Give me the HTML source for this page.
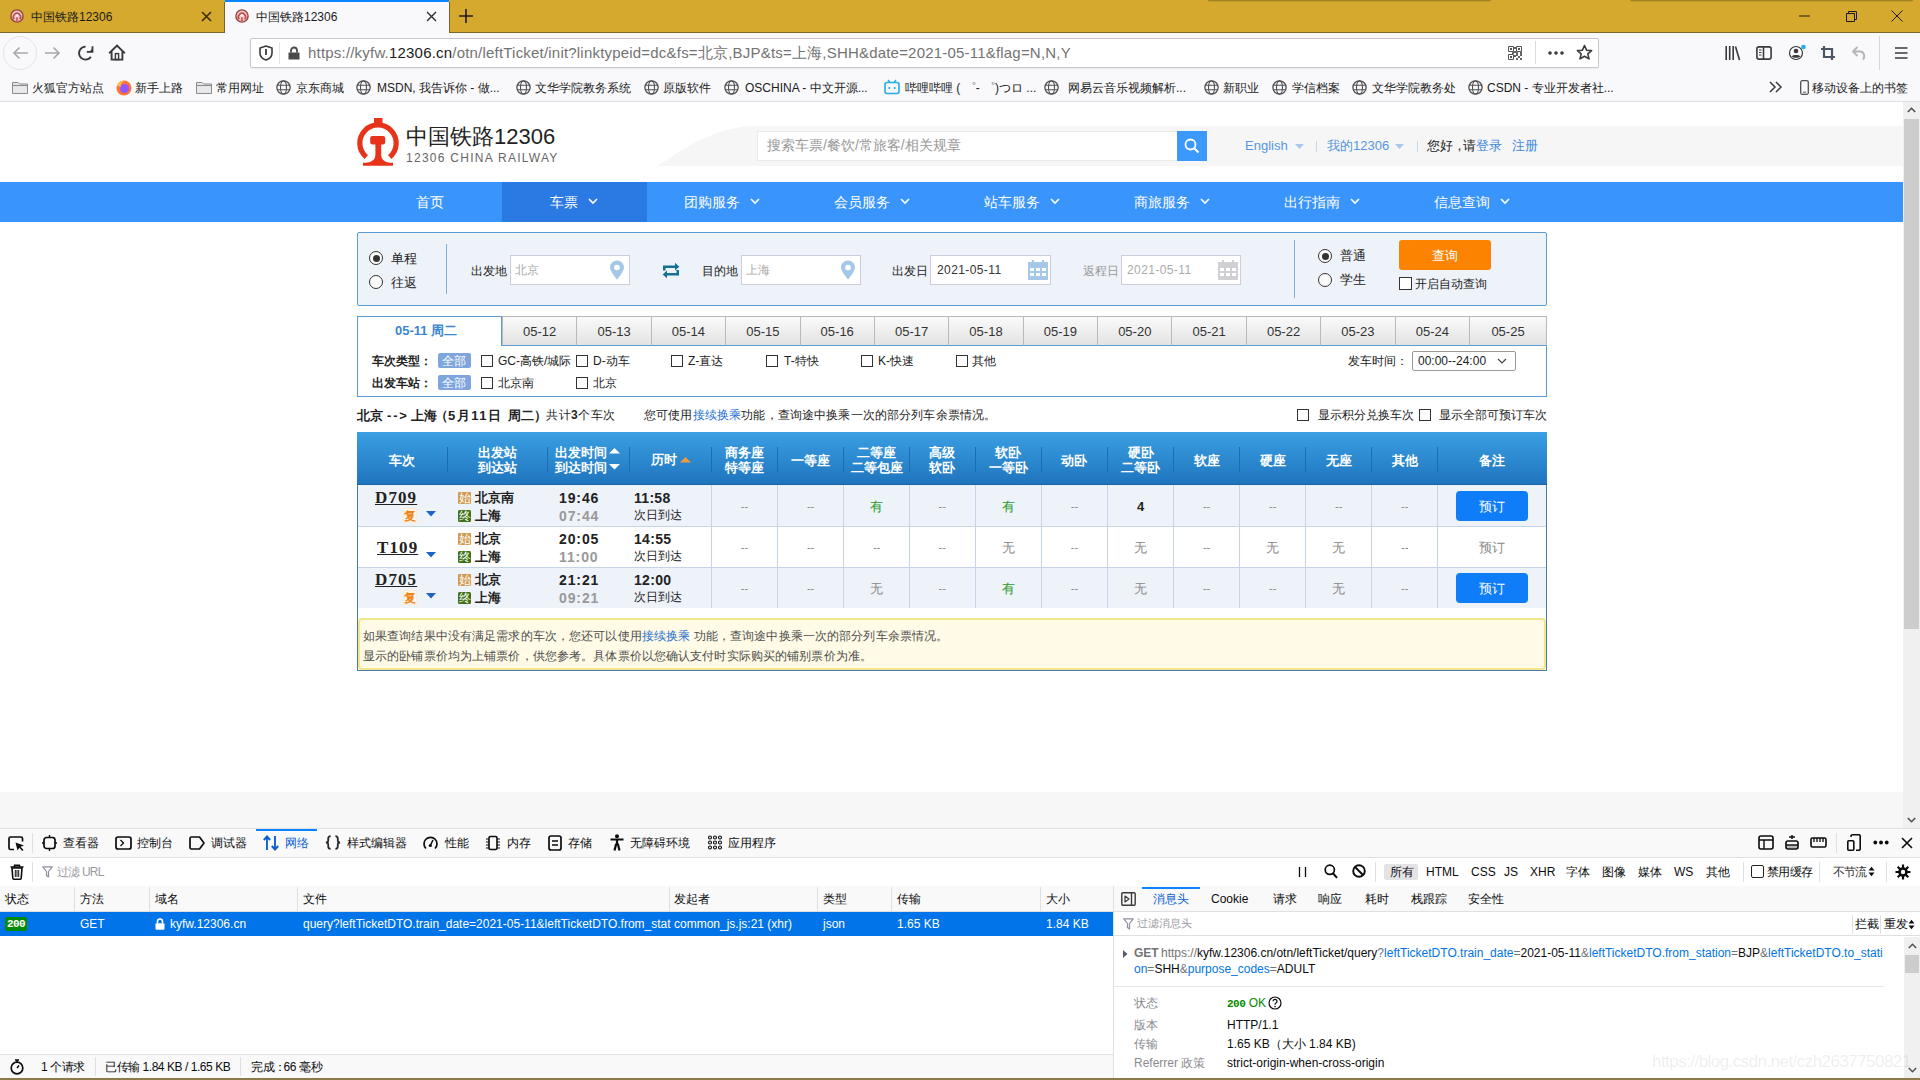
<!DOCTYPE html>
<html><head><meta charset="utf-8">
<style>
*{margin:0;padding:0;box-sizing:border-box}
html,body{width:1920px;height:1080px;overflow:hidden;background:#fff;font-family:"Liberation Sans",sans-serif;position:relative}
.a{position:absolute}
.t{position:absolute;white-space:nowrap;line-height:1}
svg{position:absolute;overflow:visible}
/* chrome */
#tabbar{left:0;top:0;width:1920px;height:33px;background:#d5a92d;border-bottom:1px solid #7a6830}
.tabtxt{font-size:12px;color:#1b1b1b}
.bm{font-size:12px;color:#1b1b1b;top:82px}
.dt{font-size:12px;color:#0c0c0d;top:837px}
.dh{font-size:12px;color:#0c0c0d;top:893px}
.dr{font-size:12px;color:#fff;top:918px}
.dp{font-size:12px;color:#0c0c0d}
</style></head><body>
<!-- ============ TAB BAR ============ -->
<div class="a" id="tabbar"></div>
<div class="a" style="left:1208px;top:0;width:283px;height:2px;background:linear-gradient(rgba(60,50,20,.45),rgba(60,50,20,0));border-radius:0 0 3px 3px"></div>
<div class="a" style="left:1630px;top:0;width:283px;height:2px;background:linear-gradient(rgba(60,50,20,.45),rgba(60,50,20,0));border-radius:0 0 3px 3px"></div>
<div class="a" style="left:225px;top:0;width:224px;height:33px;background:#f9f9fb"></div>
<div class="a" style="left:225px;top:0;width:224px;height:2px;background:#0a84ff"></div>
<div class="a" style="left:224px;top:2px;width:1px;height:31px;background:#76642e"></div>
<div class="a" style="left:449px;top:2px;width:1px;height:31px;background:#76642e"></div>
<!-- favicons -->
<svg style="left:10px;top:9px" width="14" height="14" viewBox="0 0 14 14"><circle cx="7" cy="7" r="6.1" fill="#f6caca" stroke="#96443f" stroke-width="1.4"/><path d="M4.2 10.2A3.6 3.6 0 1 1 9.8 10.2" fill="none" stroke="#b8504c" stroke-width="1.6"/><path d="M5.6 12.2H8.4L7.6 8H6.4Z" fill="#c96a66"/><circle cx="7" cy="6.5" r="1.3" fill="#fff2f2"/></svg>
<div class="t tabtxt" style="left:31px;top:11px">中国铁路12306</div>
<svg style="left:201px;top:11px" width="11" height="11"><path d="M1 1L10 10M10 1L1 10" stroke="#3a2c08" stroke-width="1.6"/></svg>
<svg style="left:235px;top:9px" width="14" height="14" viewBox="0 0 14 14"><circle cx="7" cy="7" r="6.1" fill="#f6caca" stroke="#96443f" stroke-width="1.4"/><path d="M4.2 10.2A3.6 3.6 0 1 1 9.8 10.2" fill="none" stroke="#b8504c" stroke-width="1.6"/><path d="M5.6 12.2H8.4L7.6 8H6.4Z" fill="#c96a66"/><circle cx="7" cy="6.5" r="1.3" fill="#fff2f2"/></svg>
<div class="t tabtxt" style="left:256px;top:11px">中国铁路12306</div>
<svg style="left:426px;top:11px" width="11" height="11"><path d="M1 1L10 10M10 1L1 10" stroke="#2b2b2b" stroke-width="1.4"/></svg>
<svg style="left:459px;top:9px" width="14" height="14"><path d="M7 0V14M0 7H14" stroke="#1b1b1b" stroke-width="1.6"/></svg>
<!-- window controls -->
<svg style="left:1799px;top:15px" width="12" height="2"><path d="M0 1H11" stroke="#1b1b1b" stroke-width="1"/></svg>
<svg style="left:1846px;top:11px" width="12" height="12"><path d="M0.5 2.5H8.5V10.5H0.5Z M2.5 2.5V0.5H10.5V8.5H8.5" fill="none" stroke="#1b1b1b" stroke-width="1"/></svg>
<svg style="left:1891px;top:10px" width="12" height="12"><path d="M0.5 0.5L11.5 11.5M11.5 0.5L0.5 11.5" stroke="#1b1b1b" stroke-width="1"/></svg>

<!-- ============ NAV BAR ============ -->
<div class="a" style="left:0;top:33px;width:1920px;height:39px;background:#f9f9fb"></div>
<div class="a" style="left:3px;top:36px;width:34px;height:34px;border-radius:50%;border:1px solid #e3e3e6"></div>
<svg style="left:12px;top:46px" width="17" height="14"><path d="M16 7H2M7.5 1.5L2 7L7.5 12.5" fill="none" stroke="#a8a8ab" stroke-width="1.6"/></svg>
<svg style="left:44px;top:46px" width="17" height="14"><path d="M1 7H15M9.5 1.5L15 7L9.5 12.5" fill="none" stroke="#a8a8ab" stroke-width="1.6"/></svg>
<svg style="left:77px;top:45px" width="17" height="16"><path d="M8.6 1.6A6.5 6.5 0 1 0 13.9 11.8" fill="none" stroke="#3a3a3c" stroke-width="1.8"/><path d="M9.8 6.9H15.5V1.2" fill="none" stroke="#3a3a3c" stroke-width="1.8"/><path d="M12 6.9H15.5V3.4Z" fill="#3a3a3c"/></svg>
<svg style="left:108px;top:44px" width="18" height="17"><path d="M1.2 9.3L9 1.6L16.8 9.3" fill="none" stroke="#3a3a3c" stroke-width="1.9"/><path d="M3.6 7.6V15.6H14.4V7.6" fill="none" stroke="#3a3a3c" stroke-width="1.9"/><rect x="7.4" y="9.6" width="3.2" height="6" fill="none" stroke="#3a3a3c" stroke-width="1.4"/></svg>

<!-- url bar -->
<div class="a" style="left:250px;top:38px;width:1349px;height:30px;background:#fff;border:1px solid #c6c6cb;border-radius:2px;box-shadow:0 1px 2px rgba(0,0,0,.06)"></div>
<svg style="left:259px;top:45px" width="14" height="16"><path d="M7 1L13 3V8C13 11.5 10 14 7 15C4 14 1 11.5 1 8V3Z" fill="none" stroke="#3a3a3c" stroke-width="1.6"/><path d="M7 4V10" stroke="#3a3a3c" stroke-width="1.8"/></svg>
<div class="a" style="left:279px;top:42px;width:1px;height:22px;background:#e5e5e8"></div>
<svg style="left:288px;top:46px" width="12" height="14"><path d="M3 6.5V4.5A3 3 0 0 1 9 4.5V6.5" fill="none" stroke="#4a4a4c" stroke-width="1.8"/><rect x="0.5" y="6.5" width="11" height="7" fill="#4a4a4c"/></svg>
<div class="t" style="left:308px;top:45px;font-size:15px;color:#737373;letter-spacing:0.2px">https://kyfw.<span style="color:#1b1b1b">12306.cn</span>/otn/leftTicket/init?linktypeid=dc&amp;fs=北京,BJP&amp;ts=上海,SHH&amp;date=2021-05-11&amp;flag=N,N,Y</div>
<svg style="left:1508px;top:46px" width="14" height="14" viewBox="0 0 14 14"><path d="M0.5 0.5h5v5h-5zM8.5 0.5h5v5h-5zM0.5 8.5h5v5h-5z" fill="none" stroke="#555" stroke-width="1"/><rect x="2" y="2" width="2" height="2" fill="#555"/><rect x="10" y="2" width="2" height="2" fill="#555"/><rect x="2" y="10" width="2" height="2" fill="#555"/><path d="M6 1h2v2H6zM6 5h2v2H6zM4 6h2v2H4zM8 6h2v2H8zM12 6h2v2h-2zM6 9h2v2H6zM8 8h2v2H8zM10 10h2v2h-2zM8 12h2v2H8zM12 12h2v2h-2zM12 8h2v2h-2z" fill="#666"/></svg>
<div class="a" style="left:1535px;top:41px;width:1px;height:23px;background:#dcdce0"></div>
<svg style="left:1547px;top:50px" width="18" height="6"><circle cx="3" cy="3" r="1.8" fill="#3a3a3c"/><circle cx="9" cy="3" r="1.8" fill="#3a3a3c"/><circle cx="15" cy="3" r="1.8" fill="#3a3a3c"/></svg>
<svg style="left:1576px;top:44px" width="17" height="17"><path d="M8.5 1.5L10.6 6.2L15.6 6.6L11.8 9.9L13 14.9L8.5 12.2L4 14.9L5.2 9.9L1.4 6.6L6.4 6.2Z" fill="none" stroke="#3a3a3c" stroke-width="1.6" stroke-linejoin="round"/></svg>
<!-- right toolbar icons -->
<svg style="left:1725px;top:46px" width="16" height="14"><path d="M1.2 0V14M4.7 0V14M8.2 0V14M10.5 0.5L14.5 14" fill="none" stroke="#3a3a3c" stroke-width="1.6"/></svg>
<svg style="left:1756px;top:46px" width="16" height="14"><rect x="0.9" y="0.9" width="14.2" height="12.2" rx="2" fill="none" stroke="#3a3a3c" stroke-width="1.6"/><path d="M7.5 1V13" stroke="#3a3a3c" stroke-width="1.6"/><path d="M3 4H5.5M3 6.5H5.5M3 9H5.5" stroke="#3a3a3c" stroke-width="1"/></svg>
<svg style="left:1789px;top:45px" width="18" height="16"><circle cx="7" cy="8" r="6.5" fill="none" stroke="#3a3a3c" stroke-width="1.2"/><circle cx="7" cy="6" r="2.3" fill="#3a3a3c"/><path d="M2.8 11.5C4 9.6 10 9.6 11.2 11.5C10 13.3 4 13.3 2.8 11.5Z" fill="#3a3a3c"/><circle cx="14.5" cy="2" r="2.3" fill="#26a9ee"/></svg>
<svg style="left:1821px;top:46px" width="15" height="15"><path d="M3 0V11H14M0 3H11V14" fill="none" stroke="#4b5563" stroke-width="2.2"/></svg>
<svg style="left:1852px;top:46px" width="16" height="14"><path d="M5.5 1L1 5.5L5.5 10" fill="none" stroke="#b5b5b8" stroke-width="1.8" stroke-linejoin="round"/><path d="M1.5 5.5H9A5 5 0 0 1 11 13.5" fill="none" stroke="#b5b5b8" stroke-width="2"/></svg>
<div class="a" style="left:1879px;top:36px;width:1px;height:34px;background:#d7d7db"></div>
<svg style="left:1895px;top:47px" width="13" height="12"><path d="M0 1H12.5M0 6H12.5M0 11H12.5" stroke="#3a3a3c" stroke-width="1.6"/></svg>

<!-- ============ BOOKMARKS BAR ============ -->
<div class="a" style="left:0;top:72px;width:1920px;height:30px;background:#f9f9fb;border-bottom:1px solid #e0e0e2"></div>
<svg style="left:12px;top:81px" width="16" height="13"><path d="M0.5 1.5H6L7.5 3H15.5V12.5H0.5Z" fill="#e8e8ea" stroke="#8a8a8e" stroke-width="1"/><path d="M0.5 4.5H15.5" stroke="#8a8a8e" stroke-width="1"/></svg>
<div class="t bm" style="left:32px">火狐官方站点</div>
<svg style="left:116px;top:80px" width="16" height="16" viewBox="0 0 16 16"><circle cx="8" cy="8" r="7.5" fill="#ff7139"/><circle cx="8.5" cy="8.5" r="4.5" fill="#9059ff"/><path d="M1 6C2 2 6 0 9 1C6 2 4 4 5 7C3 6 2 6 1 6Z" fill="#ffbd4f"/></svg>
<div class="t bm" style="left:135px">新手上路</div>
<svg style="left:196px;top:81px" width="16" height="13"><path d="M0.5 1.5H6L7.5 3H15.5V12.5H0.5Z" fill="#e8e8ea" stroke="#8a8a8e" stroke-width="1"/><path d="M0.5 4.5H15.5" stroke="#8a8a8e" stroke-width="1"/></svg>
<div class="t bm" style="left:216px">常用网址</div>
<svg style="left:276px;top:80px" width="15" height="15" viewBox="0 0 15 15"><circle cx="7.5" cy="7.5" r="6.6" fill="none" stroke="#505055" stroke-width="1.3"/><ellipse cx="7.5" cy="7.5" rx="3" ry="6.6" fill="none" stroke="#505055" stroke-width="1.1"/><path d="M1 5.2H14M1 9.8H14" stroke="#505055" stroke-width="1.1"/></svg>
<div class="t bm" style="left:296px">京东商城</div>
<svg style="left:356px;top:80px" width="15" height="15" viewBox="0 0 15 15"><circle cx="7.5" cy="7.5" r="6.6" fill="none" stroke="#505055" stroke-width="1.3"/><ellipse cx="7.5" cy="7.5" rx="3" ry="6.6" fill="none" stroke="#505055" stroke-width="1.1"/><path d="M1 5.2H14M1 9.8H14" stroke="#505055" stroke-width="1.1"/></svg>
<div class="t bm" style="left:377px">MSDN, 我告诉你 - 做...</div>
<svg style="left:516px;top:80px" width="15" height="15" viewBox="0 0 15 15"><circle cx="7.5" cy="7.5" r="6.6" fill="none" stroke="#505055" stroke-width="1.3"/><ellipse cx="7.5" cy="7.5" rx="3" ry="6.6" fill="none" stroke="#505055" stroke-width="1.1"/><path d="M1 5.2H14M1 9.8H14" stroke="#505055" stroke-width="1.1"/></svg>
<div class="t bm" style="left:535px">文华学院教务系统</div>
<svg style="left:644px;top:80px" width="15" height="15" viewBox="0 0 15 15"><circle cx="7.5" cy="7.5" r="6.6" fill="none" stroke="#505055" stroke-width="1.3"/><ellipse cx="7.5" cy="7.5" rx="3" ry="6.6" fill="none" stroke="#505055" stroke-width="1.1"/><path d="M1 5.2H14M1 9.8H14" stroke="#505055" stroke-width="1.1"/></svg>
<div class="t bm" style="left:663px">原版软件</div>
<svg style="left:724px;top:80px" width="15" height="15" viewBox="0 0 15 15"><circle cx="7.5" cy="7.5" r="6.6" fill="none" stroke="#505055" stroke-width="1.3"/><ellipse cx="7.5" cy="7.5" rx="3" ry="6.6" fill="none" stroke="#505055" stroke-width="1.1"/><path d="M1 5.2H14M1 9.8H14" stroke="#505055" stroke-width="1.1"/></svg>
<div class="t bm" style="left:745px">OSCHINA - 中文开源...</div>
<svg style="left:884px;top:79px" width="16" height="16" viewBox="0 0 16 16"><rect x="1" y="3.5" width="14" height="11" rx="2" fill="none" stroke="#23ade5" stroke-width="1.6"/><path d="M4 1L6 3.5M12 1L10 3.5" stroke="#23ade5" stroke-width="1.4"/><circle cx="5.3" cy="9" r="1.1" fill="#23ade5"/><circle cx="10.7" cy="9" r="1.1" fill="#23ade5"/></svg>
<div class="t bm" style="left:905px">哔哩哔哩 ( ゜- ゜)つロ ...</div>
<svg style="left:1044px;top:80px" width="15" height="15" viewBox="0 0 15 15"><circle cx="7.5" cy="7.5" r="6.6" fill="none" stroke="#505055" stroke-width="1.3"/><ellipse cx="7.5" cy="7.5" rx="3" ry="6.6" fill="none" stroke="#505055" stroke-width="1.1"/><path d="M1 5.2H14M1 9.8H14" stroke="#505055" stroke-width="1.1"/></svg>
<div class="t bm" style="left:1068px">网易云音乐视频解析...</div>
<svg style="left:1204px;top:80px" width="15" height="15" viewBox="0 0 15 15"><circle cx="7.5" cy="7.5" r="6.6" fill="none" stroke="#505055" stroke-width="1.3"/><ellipse cx="7.5" cy="7.5" rx="3" ry="6.6" fill="none" stroke="#505055" stroke-width="1.1"/><path d="M1 5.2H14M1 9.8H14" stroke="#505055" stroke-width="1.1"/></svg>
<div class="t bm" style="left:1223px">新职业</div>
<svg style="left:1272px;top:80px" width="15" height="15" viewBox="0 0 15 15"><circle cx="7.5" cy="7.5" r="6.6" fill="none" stroke="#505055" stroke-width="1.3"/><ellipse cx="7.5" cy="7.5" rx="3" ry="6.6" fill="none" stroke="#505055" stroke-width="1.1"/><path d="M1 5.2H14M1 9.8H14" stroke="#505055" stroke-width="1.1"/></svg>
<div class="t bm" style="left:1292px">学信档案</div>
<svg style="left:1352px;top:80px" width="15" height="15" viewBox="0 0 15 15"><circle cx="7.5" cy="7.5" r="6.6" fill="none" stroke="#505055" stroke-width="1.3"/><ellipse cx="7.5" cy="7.5" rx="3" ry="6.6" fill="none" stroke="#505055" stroke-width="1.1"/><path d="M1 5.2H14M1 9.8H14" stroke="#505055" stroke-width="1.1"/></svg>
<div class="t bm" style="left:1372px">文华学院教务处</div>
<svg style="left:1468px;top:80px" width="15" height="15" viewBox="0 0 15 15"><circle cx="7.5" cy="7.5" r="6.6" fill="none" stroke="#505055" stroke-width="1.3"/><ellipse cx="7.5" cy="7.5" rx="3" ry="6.6" fill="none" stroke="#505055" stroke-width="1.1"/><path d="M1 5.2H14M1 9.8H14" stroke="#505055" stroke-width="1.1"/></svg>
<div class="t bm" style="left:1487px">CSDN - 专业开发者社...</div>
<svg style="left:1769px;top:81px" width="14" height="12"><path d="M1 1L6 6L1 11M7 1L12 6L7 11" fill="none" stroke="#3a3a3c" stroke-width="1.5"/></svg>
<svg style="left:1800px;top:80px" width="9" height="15"><rect x="0.7" y="0.7" width="7.6" height="13.6" rx="1.5" fill="none" stroke="#505055" stroke-width="1.3"/><path d="M3 12.2H6" stroke="#505055" stroke-width="1"/></svg>
<div class="t bm" style="left:1812px">移动设备上的书签</div>

<!-- ============ PAGE ============ -->
<!-- PAGE -->
<!-- page bg -->
<div class="a" style="left:0;top:102px;width:1903px;height:726px;background:#fff"></div>
<div class="a" style="left:0;top:792px;width:1903px;height:36px;background:#f7f7f8"></div>
<!-- scrollbar -->
<div class="a" style="left:1903px;top:102px;width:17px;height:726px;background:#f0f0f0"></div>
<div class="a" style="left:1904px;top:119px;width:15px;height:510px;background:#cdcdcd"></div>
<svg style="left:1907px;top:107px" width="9" height="6"><path d="M0.8 5L4.5 1.3L8.2 5" fill="none" stroke="#505050" stroke-width="1.6"/></svg>
<svg style="left:1907px;top:817px" width="9" height="6"><path d="M0.8 1L4.5 4.7L8.2 1" fill="none" stroke="#505050" stroke-width="1.6"/></svg>

<!-- header -->
<svg style="left:357px;top:118px" width="43" height="49" viewBox="0 0 43 49"><path d="M9.3 39.1A18.2 18.2 0 1 1 32.7 39.1" fill="none" stroke="#e6331a" stroke-width="5.2"/><rect x="17" y="0" width="8.5" height="6" fill="#e6331a"/><rect x="13.2" y="18" width="15" height="8.5" rx="2.2" fill="#e6331a"/><path d="M18.4 26H24.2V37Q24.2 44 33 44.7H36V47.7H6V44.7H9Q18.4 44 18.4 37Z" fill="#e6331a"/></svg>
<div class="t" style="left:406px;top:126px;font-size:22px;color:#222">中国铁路12306</div>
<div class="t" style="left:406px;top:152px;font-size:12px;color:#666;letter-spacing:1.27px">12306 CHINA RAILWAY</div>
<svg style="left:656px;top:126px" width="1247" height="40"><path d="M2 40C30 20 60 2 95 0H1247V40Z" fill="#f6f6f6"/></svg>
<div class="a" style="left:757px;top:131px;width:421px;height:30px;background:#fff;border:1px solid #eaeaea"></div>
<div class="t" style="left:767px;top:138px;font-size:14px;color:#999">搜索车票/餐饮/常旅客/相关规章</div>
<div class="a" style="left:1177px;top:131px;width:30px;height:30px;background:#3b99fc"></div>
<svg style="left:1184px;top:138px" width="16" height="16"><circle cx="6.5" cy="6.5" r="5" fill="none" stroke="#fff" stroke-width="1.8"/><path d="M10.2 10.2L14.5 14.5" stroke="#fff" stroke-width="2"/></svg>
<div class="t" style="left:1245px;top:139px;font-size:13px;color:#5597e3">English</div>
<svg style="left:1295px;top:144px" width="10" height="6"><path d="M0 0H9L4.5 5Z" fill="#a9c8ec"/></svg>
<div class="a" style="left:1316px;top:141px;width:1px;height:11px;background:#c8d8ea"></div>
<div class="t" style="left:1327px;top:139px;font-size:13px;color:#5597e3">我的12306</div>
<svg style="left:1395px;top:144px" width="10" height="6"><path d="M0 0H9L4.5 5Z" fill="#a9c8ec"/></svg>
<div class="a" style="left:1417px;top:141px;width:1px;height:11px;background:#c8d8ea"></div>
<div class="t" style="left:1427px;top:139px;font-size:13px;color:#222">您好<span style="letter-spacing:-3px">，</span>请<span style="color:#3b87dd">登录</span></div>
<div class="t" style="left:1512px;top:139px;font-size:13px;color:#3b87dd">注册</div>

<!-- nav -->
<div class="a" style="left:0;top:182px;width:1903px;height:40px;background:#3994fb"></div>
<div class="a" style="left:502px;top:182px;width:145px;height:40px;background:#2b79e2"></div>
<div class="t" style="left:416px;top:195px;font-size:14px;color:#fff">首页</div>
<div class="t" style="left:550px;top:195px;font-size:14px;color:#fff">车票</div>
<svg style="left:588px;top:198px" width="10" height="7"><path d="M1 1L5 5L9 1" fill="none" stroke="#fff" stroke-width="1.6"/></svg>
<div class="t" style="left:684px;top:195px;font-size:14px;color:#fff">团购服务</div>
<svg style="left:750px;top:198px" width="10" height="7"><path d="M1 1L5 5L9 1" fill="none" stroke="#fff" stroke-width="1.6"/></svg>
<div class="t" style="left:834px;top:195px;font-size:14px;color:#fff">会员服务</div>
<svg style="left:900px;top:198px" width="10" height="7"><path d="M1 1L5 5L9 1" fill="none" stroke="#fff" stroke-width="1.6"/></svg>
<div class="t" style="left:984px;top:195px;font-size:14px;color:#fff">站车服务</div>
<svg style="left:1050px;top:198px" width="10" height="7"><path d="M1 1L5 5L9 1" fill="none" stroke="#fff" stroke-width="1.6"/></svg>
<div class="t" style="left:1134px;top:195px;font-size:14px;color:#fff">商旅服务</div>
<svg style="left:1200px;top:198px" width="10" height="7"><path d="M1 1L5 5L9 1" fill="none" stroke="#fff" stroke-width="1.6"/></svg>
<div class="t" style="left:1284px;top:195px;font-size:14px;color:#fff">出行指南</div>
<svg style="left:1350px;top:198px" width="10" height="7"><path d="M1 1L5 5L9 1" fill="none" stroke="#fff" stroke-width="1.6"/></svg>
<div class="t" style="left:1434px;top:195px;font-size:14px;color:#fff">信息查询</div>
<svg style="left:1500px;top:198px" width="10" height="7"><path d="M1 1L5 5L9 1" fill="none" stroke="#fff" stroke-width="1.6"/></svg>

<!-- search form -->
<div class="a" style="left:357px;top:232px;width:1190px;height:74px;background:#eef2f9;border:1px solid #5b9bd1;border-radius:2px"></div>
<div class="a" style="left:369px;top:251px;width:14px;height:14px;border-radius:50%;border:1.3px solid #333;background:#fff"></div>
<div class="a" style="left:372.5px;top:254.5px;width:7px;height:7px;border-radius:50%;background:#333"></div>
<div class="t" style="left:391px;top:252px;font-size:13px;color:#222">单程</div>
<div class="a" style="left:369px;top:275px;width:14px;height:14px;border-radius:50%;border:1.3px solid #333;background:#fafafa"></div>
<div class="t" style="left:391px;top:276px;font-size:13px;color:#222">往返</div>
<div class="a" style="left:446px;top:244px;width:1px;height:50px;background:#7fb0d8"></div>
<div class="t" style="left:471px;top:265px;font-size:12px;color:#222">出发地</div>
<div class="a" style="left:510px;top:255px;width:120px;height:30px;background:#fff;border:1px solid #ccd;"></div>
<div class="t" style="left:515px;top:264px;font-size:12px;color:#aaa">北京</div>
<svg style="left:609px;top:260px" width="16" height="20" viewBox="0 0 16 20"><path d="M8 19.5C8 19.5 1 11.5 1 7.5A7 7 0 0 1 15 7.5C15 11.5 8 19.5 8 19.5Z" fill="#a6c8e8"/><circle cx="8" cy="7.5" r="2.8" fill="#fff"/></svg>
<svg style="left:662px;top:262px" width="18" height="17" viewBox="0 0 18 17"><path d="M1 8.5V3.5H13V0.8L17.3 4.7L13 8.6V6H3.5V8.5Z" fill="#15718f"/><path d="M17 8V13.6H5V16.3L0.7 12.4L5 8.5V11.1H14.5V8Z" fill="#15718f"/></svg>
<div class="t" style="left:702px;top:265px;font-size:12px;color:#222">目的地</div>
<div class="a" style="left:741px;top:255px;width:120px;height:30px;background:#fff;border:1px solid #ccd;"></div>
<div class="t" style="left:746px;top:264px;font-size:12px;color:#aaa">上海</div>
<svg style="left:840px;top:260px" width="16" height="20" viewBox="0 0 16 20"><path d="M8 19.5C8 19.5 1 11.5 1 7.5A7 7 0 0 1 15 7.5C15 11.5 8 19.5 8 19.5Z" fill="#a6c8e8"/><circle cx="8" cy="7.5" r="2.8" fill="#fff"/></svg>
<div class="t" style="left:892px;top:265px;font-size:12px;color:#222">出发日</div>
<div class="a" style="left:930px;top:255px;width:121px;height:30px;background:#fff;border:1px solid #ccd;"></div>
<div class="t" style="left:937px;top:264px;font-size:12px;color:#333;letter-spacing:0.4px">2021-05-11</div>
<svg style="left:1028px;top:260px" width="20" height="20" viewBox="0 0 20 20"><rect x="0" y="2" width="20" height="18" fill="#a6c8e8"/><rect x="4" y="0" width="2" height="4" fill="#a6c8e8"/><rect x="14" y="0" width="2" height="4" fill="#a6c8e8"/><path d="M2 8h4v3H2zM8 8h4v3H8zM14 8h4v3h-4zM2 13h4v3H2zM8 13h4v3H8zM14 13h4v3h-4z" fill="#fff"/></svg>
<div class="t" style="left:1083px;top:265px;font-size:12px;color:#999">返程日</div>
<div class="a" style="left:1121px;top:255px;width:120px;height:30px;background:#fff;border:1px solid #ccd;"></div>
<div class="t" style="left:1127px;top:264px;font-size:12px;color:#aaa;letter-spacing:0.4px">2021-05-11</div>
<svg style="left:1218px;top:260px" width="20" height="20" viewBox="0 0 20 20"><rect x="0" y="2" width="20" height="18" fill="#cfcfd4"/><rect x="4" y="0" width="2" height="4" fill="#cfcfd4"/><rect x="14" y="0" width="2" height="4" fill="#cfcfd4"/><path d="M2 8h4v3H2zM8 8h4v3H8zM14 8h4v3h-4zM2 13h4v3H2zM8 13h4v3H8zM14 13h4v3h-4z" fill="#fff"/></svg>
<div class="a" style="left:1294px;top:240px;width:1px;height:58px;background:#7fb0d8"></div>
<div class="a" style="left:1318px;top:249px;width:14px;height:14px;border-radius:50%;border:1.3px solid #333;background:#fff"></div>
<div class="a" style="left:1321.5px;top:252.5px;width:7px;height:7px;border-radius:50%;background:#333"></div>
<div class="t" style="left:1340px;top:250px;font-size:12.5px;color:#222">普通</div>
<div class="a" style="left:1318px;top:273px;width:14px;height:14px;border-radius:50%;border:1.3px solid #333;background:#fafafa"></div>
<div class="t" style="left:1340px;top:274px;font-size:12.5px;color:#222">学生</div>
<div class="a" style="left:1399px;top:240px;width:92px;height:30px;background:#fc8302;border-radius:3px"></div>
<div class="t" style="left:1432px;top:249px;font-size:13px;color:#fff">查询</div>
<div class="a" style="left:1399px;top:277px;width:13px;height:13px;border:1px solid #333;background:#fff"></div>
<div class="t" style="left:1415px;top:278px;font-size:12px;color:#222">开启自动查询</div>

<!-- date tabs -->
<div class="a" style="left:357px;top:345px;width:1190px;height:52px;background:#fff;border:1px solid #5b9bd1;border-top:none"></div>
<div class="a" style="left:502.00px;top:316px;width:75.38px;height:30px;background:linear-gradient(#fafafa,#e2e2e2);border:1px solid #b9b9b9;border-bottom:1px solid #5b9bd1"></div>
<div class="t" style="left:502.00px;width:75.38px;text-align:center;top:325px;font-size:13px;color:#333">05-12</div>
<div class="a" style="left:576.38px;top:316px;width:75.38px;height:30px;background:linear-gradient(#fafafa,#e2e2e2);border:1px solid #b9b9b9;border-bottom:1px solid #5b9bd1"></div>
<div class="t" style="left:576.38px;width:75.38px;text-align:center;top:325px;font-size:13px;color:#333">05-13</div>
<div class="a" style="left:650.77px;top:316px;width:75.38px;height:30px;background:linear-gradient(#fafafa,#e2e2e2);border:1px solid #b9b9b9;border-bottom:1px solid #5b9bd1"></div>
<div class="t" style="left:650.77px;width:75.38px;text-align:center;top:325px;font-size:13px;color:#333">05-14</div>
<div class="a" style="left:725.15px;top:316px;width:75.38px;height:30px;background:linear-gradient(#fafafa,#e2e2e2);border:1px solid #b9b9b9;border-bottom:1px solid #5b9bd1"></div>
<div class="t" style="left:725.15px;width:75.38px;text-align:center;top:325px;font-size:13px;color:#333">05-15</div>
<div class="a" style="left:799.54px;top:316px;width:75.38px;height:30px;background:linear-gradient(#fafafa,#e2e2e2);border:1px solid #b9b9b9;border-bottom:1px solid #5b9bd1"></div>
<div class="t" style="left:799.54px;width:75.38px;text-align:center;top:325px;font-size:13px;color:#333">05-16</div>
<div class="a" style="left:873.92px;top:316px;width:75.38px;height:30px;background:linear-gradient(#fafafa,#e2e2e2);border:1px solid #b9b9b9;border-bottom:1px solid #5b9bd1"></div>
<div class="t" style="left:873.92px;width:75.38px;text-align:center;top:325px;font-size:13px;color:#333">05-17</div>
<div class="a" style="left:948.31px;top:316px;width:75.38px;height:30px;background:linear-gradient(#fafafa,#e2e2e2);border:1px solid #b9b9b9;border-bottom:1px solid #5b9bd1"></div>
<div class="t" style="left:948.31px;width:75.38px;text-align:center;top:325px;font-size:13px;color:#333">05-18</div>
<div class="a" style="left:1022.69px;top:316px;width:75.38px;height:30px;background:linear-gradient(#fafafa,#e2e2e2);border:1px solid #b9b9b9;border-bottom:1px solid #5b9bd1"></div>
<div class="t" style="left:1022.69px;width:75.38px;text-align:center;top:325px;font-size:13px;color:#333">05-19</div>
<div class="a" style="left:1097.08px;top:316px;width:75.38px;height:30px;background:linear-gradient(#fafafa,#e2e2e2);border:1px solid #b9b9b9;border-bottom:1px solid #5b9bd1"></div>
<div class="t" style="left:1097.08px;width:75.38px;text-align:center;top:325px;font-size:13px;color:#333">05-20</div>
<div class="a" style="left:1171.46px;top:316px;width:75.38px;height:30px;background:linear-gradient(#fafafa,#e2e2e2);border:1px solid #b9b9b9;border-bottom:1px solid #5b9bd1"></div>
<div class="t" style="left:1171.46px;width:75.38px;text-align:center;top:325px;font-size:13px;color:#333">05-21</div>
<div class="a" style="left:1245.85px;top:316px;width:75.38px;height:30px;background:linear-gradient(#fafafa,#e2e2e2);border:1px solid #b9b9b9;border-bottom:1px solid #5b9bd1"></div>
<div class="t" style="left:1245.85px;width:75.38px;text-align:center;top:325px;font-size:13px;color:#333">05-22</div>
<div class="a" style="left:1320.23px;top:316px;width:75.38px;height:30px;background:linear-gradient(#fafafa,#e2e2e2);border:1px solid #b9b9b9;border-bottom:1px solid #5b9bd1"></div>
<div class="t" style="left:1320.23px;width:75.38px;text-align:center;top:325px;font-size:13px;color:#333">05-23</div>
<div class="a" style="left:1394.62px;top:316px;width:75.38px;height:30px;background:linear-gradient(#fafafa,#e2e2e2);border:1px solid #b9b9b9;border-bottom:1px solid #5b9bd1"></div>
<div class="t" style="left:1394.62px;width:75.38px;text-align:center;top:325px;font-size:13px;color:#333">05-24</div>
<div class="a" style="left:1469.00px;top:316px;width:78.00px;height:30px;background:linear-gradient(#fafafa,#e2e2e2);border:1px solid #b9b9b9;border-bottom:1px solid #5b9bd1"></div>
<div class="t" style="left:1469.00px;width:78.00px;text-align:center;top:325px;font-size:13px;color:#333">05-25</div>
<div class="a" style="left:357px;top:316px;width:145px;height:30px;background:#fff;border:1px solid #5b9bd1;border-bottom:none"></div>
<div class="t" style="left:395px;top:324px;font-size:13px;font-weight:bold;color:#3a87cf">05-11 周二</div>

<!-- filters -->
<div class="t" style="left:372px;top:355px;font-size:12px;font-weight:bold;color:#222">车次类型：</div>
<div class="a" style="left:438px;top:353px;width:33px;height:15px;background:#7ea5dc;border-radius:2px"></div>
<div class="t" style="left:442px;top:355px;font-size:12px;color:#fff">全部</div>
<div class="t" style="left:372px;top:377px;font-size:12px;font-weight:bold;color:#222">出发车站：</div>
<div class="a" style="left:438px;top:375px;width:33px;height:15px;background:#7ea5dc;border-radius:2px"></div>
<div class="t" style="left:442px;top:377px;font-size:12px;color:#fff">全部</div>
<div class="a" style="left:481px;top:355px;width:12px;height:12px;border:1px solid #333;background:#fff"></div>
<div class="t" style="left:498px;top:355px;font-size:12px;color:#222">GC-高铁/城际</div>
<div class="a" style="left:576px;top:355px;width:12px;height:12px;border:1px solid #333;background:#fff"></div>
<div class="t" style="left:593px;top:355px;font-size:12px;color:#222">D-动车</div>
<div class="a" style="left:671px;top:355px;width:12px;height:12px;border:1px solid #333;background:#fff"></div>
<div class="t" style="left:688px;top:355px;font-size:12px;color:#222">Z-直达</div>
<div class="a" style="left:766px;top:355px;width:12px;height:12px;border:1px solid #333;background:#fff"></div>
<div class="t" style="left:784px;top:355px;font-size:12px;color:#222">T-特快</div>
<div class="a" style="left:861px;top:355px;width:12px;height:12px;border:1px solid #333;background:#fff"></div>
<div class="t" style="left:878px;top:355px;font-size:12px;color:#222">K-快速</div>
<div class="a" style="left:956px;top:355px;width:12px;height:12px;border:1px solid #333;background:#fff"></div>
<div class="t" style="left:972px;top:355px;font-size:12px;color:#222">其他</div>
<div class="a" style="left:481px;top:377px;width:12px;height:12px;border:1px solid #333;background:#fff"></div>
<div class="t" style="left:498px;top:377px;font-size:12px;color:#222">北京南</div>
<div class="a" style="left:576px;top:377px;width:12px;height:12px;border:1px solid #333;background:#fff"></div>
<div class="t" style="left:593px;top:377px;font-size:12px;color:#222">北京</div>
<div class="t" style="left:1348px;top:355px;font-size:12px;color:#222">发车时间：</div>
<div class="a" style="left:1412px;top:351px;width:104px;height:20px;background:#fff;border:1px solid #999;border-radius:2px"></div>
<div class="t" style="left:1418px;top:355px;font-size:12px;color:#222">00:00--24:00</div>
<svg style="left:1497px;top:358px" width="10" height="6"><path d="M1 1L5 5L9 1" fill="none" stroke="#444" stroke-width="1.2"/></svg>

<!-- summary -->
<div class="t" style="left:357px;top:409px;font-size:13px;font-weight:bold;color:#222">北京</div>
<div class="t" style="left:387px;top:409px;font-size:13px;font-weight:bold;color:#222;letter-spacing:1.8px">--&gt;</div>
<div class="t" style="left:411px;top:409px;font-size:13px;font-weight:bold;color:#222">上海</div>
<div class="t" style="left:435px;top:409px;font-size:13px;font-weight:bold;color:#222">（</div>
<div class="t" style="left:448px;top:409px;font-size:13px;font-weight:bold;color:#222;letter-spacing:1.5px">5月11日</div>
<div class="t" style="left:508px;top:409px;font-size:13px;font-weight:bold;color:#222">周二</div>
<div class="t" style="left:534px;top:409px;font-size:13px;font-weight:bold;color:#222">）</div>
<div class="t" style="left:546px;top:409px;font-size:12px;color:#222;letter-spacing:0.5px">共计<b>3</b>个车次</div>
<div class="t" style="left:644px;top:409px;font-size:12px;color:#222;letter-spacing:0.15px">您可使用<span style="color:#1e6fd0">接续换乘</span>功能，查询途中换乘一次的部分列车余票情况。</div>
<div class="a" style="left:1297px;top:409px;width:12px;height:12px;border:1px solid #333;background:#fff"></div>
<div class="t" style="left:1318px;top:409px;font-size:12px;color:#222">显示积分兑换车次</div>
<div class="a" style="left:1419px;top:409px;width:12px;height:12px;border:1px solid #333;background:#fff"></div>
<div class="t" style="left:1439px;top:409px;font-size:12px;color:#222">显示全部可预订车次</div>

<!-- table -->
<div class="a" style="left:357px;top:432px;width:1190px;height:53px;background:linear-gradient(#3b9fe2,#1f75be);border-bottom:1px solid #1a65a8"></div>
<div class="a" style="left:447px;top:447px;width:1px;height:25px;background:#1d6bb0"></div>
<div class="a" style="left:547px;top:447px;width:1px;height:25px;background:#1d6bb0"></div>
<div class="a" style="left:629px;top:447px;width:1px;height:25px;background:#1d6bb0"></div>
<div class="a" style="left:711px;top:447px;width:1px;height:25px;background:#1d6bb0"></div>
<div class="a" style="left:777px;top:447px;width:1px;height:25px;background:#1d6bb0"></div>
<div class="a" style="left:843px;top:447px;width:1px;height:25px;background:#1d6bb0"></div>
<div class="a" style="left:909px;top:447px;width:1px;height:25px;background:#1d6bb0"></div>
<div class="a" style="left:975px;top:447px;width:1px;height:25px;background:#1d6bb0"></div>
<div class="a" style="left:1041px;top:447px;width:1px;height:25px;background:#1d6bb0"></div>
<div class="a" style="left:1107px;top:447px;width:1px;height:25px;background:#1d6bb0"></div>
<div class="a" style="left:1173px;top:447px;width:1px;height:25px;background:#1d6bb0"></div>
<div class="a" style="left:1239px;top:447px;width:1px;height:25px;background:#1d6bb0"></div>
<div class="a" style="left:1305px;top:447px;width:1px;height:25px;background:#1d6bb0"></div>
<div class="a" style="left:1371px;top:447px;width:1px;height:25px;background:#1d6bb0"></div>
<div class="a" style="left:1437px;top:447px;width:1px;height:25px;background:#1d6bb0"></div>
<div class="a" style="left:357px;width:90.5px;top:452.5px;text-align:center;font-size:13px;line-height:15px;font-weight:bold;color:#fff;white-space:nowrap">车次</div>
<div class="a" style="left:447.5px;width:100.0px;top:444.5px;text-align:center;font-size:13px;line-height:15px;font-weight:bold;color:#fff;white-space:nowrap">出发站<br>到达站</div>
<div class="a" style="left:555px;top:444.5px;font-size:13px;line-height:15px;font-weight:bold;color:#fff;white-space:nowrap">出发时间<br>到达时间</div>
<svg style="left:609px;top:448px" width="11" height="6"><path d="M0 5.5L5.5 0L11 5.5Z" fill="#fff"/></svg>
<svg style="left:609px;top:464px" width="11" height="6"><path d="M0 0L5.5 5.5L11 0Z" fill="#fff"/></svg>
<div class="a" style="left:651px;top:452px;font-size:13px;line-height:15px;font-weight:bold;color:#fff;white-space:nowrap">历时</div>
<svg style="left:680px;top:457px" width="11" height="6"><path d="M0 5.5L5.5 0L11 5.5Z" fill="#f39a3c"/></svg>
<div class="a" style="left:711.5px;width:66.0px;top:444.5px;text-align:center;font-size:13px;line-height:15px;font-weight:bold;color:#fff;white-space:nowrap">商务座<br>特等座</div>
<div class="a" style="left:777.5px;width:66.25px;top:452.5px;text-align:center;font-size:13px;line-height:15px;font-weight:bold;color:#fff;white-space:nowrap">一等座</div>
<div class="a" style="left:843.75px;width:65.64999999999998px;top:444.5px;text-align:center;font-size:13px;line-height:15px;font-weight:bold;color:#fff;white-space:nowrap">二等座<br>二等包座</div>
<div class="a" style="left:909.4px;width:65.60000000000002px;top:444.5px;text-align:center;font-size:13px;line-height:15px;font-weight:bold;color:#fff;white-space:nowrap">高级<br>软卧</div>
<div class="a" style="left:975px;width:66px;top:444.5px;text-align:center;font-size:13px;line-height:15px;font-weight:bold;color:#fff;white-space:nowrap">软卧<br>一等卧</div>
<div class="a" style="left:1041px;width:66.79999999999995px;top:452.5px;text-align:center;font-size:13px;line-height:15px;font-weight:bold;color:#fff;white-space:nowrap">动卧</div>
<div class="a" style="left:1107.8px;width:65.60000000000014px;top:444.5px;text-align:center;font-size:13px;line-height:15px;font-weight:bold;color:#fff;white-space:nowrap">硬卧<br>二等卧</div>
<div class="a" style="left:1173.4px;width:66.29999999999995px;top:452.5px;text-align:center;font-size:13px;line-height:15px;font-weight:bold;color:#fff;white-space:nowrap">软座</div>
<div class="a" style="left:1239.7px;width:65.89999999999986px;top:452.5px;text-align:center;font-size:13px;line-height:15px;font-weight:bold;color:#fff;white-space:nowrap">硬座</div>
<div class="a" style="left:1305.6px;width:66.30000000000018px;top:452.5px;text-align:center;font-size:13px;line-height:15px;font-weight:bold;color:#fff;white-space:nowrap">无座</div>
<div class="a" style="left:1371.9px;width:65.59999999999991px;top:452.5px;text-align:center;font-size:13px;line-height:15px;font-weight:bold;color:#fff;white-space:nowrap">其他</div>
<div class="a" style="left:1437.5px;width:109.5px;top:452.5px;text-align:center;font-size:13px;line-height:15px;font-weight:bold;color:#fff;white-space:nowrap">备注</div>
<div class="a" style="left:357px;top:485px;width:1190px;height:41px;background:#eef2f9"></div>
<div class="a" style="left:357px;top:526px;width:1190px;height:41px;background:#fff"></div>
<div class="a" style="left:357px;top:567px;width:1190px;height:41px;background:#eef2f9"></div>
<div class="a" style="left:357px;top:526px;width:1190px;height:1px;background:#c6d5e6"></div>
<div class="a" style="left:357px;top:567px;width:1190px;height:1px;background:#c6d5e6"></div>
<div class="a" style="left:711px;top:485px;width:1px;height:123px;background:#c6d5e6"></div>
<div class="a" style="left:777px;top:485px;width:1px;height:123px;background:#c6d5e6"></div>
<div class="a" style="left:843px;top:485px;width:1px;height:123px;background:#c6d5e6"></div>
<div class="a" style="left:909px;top:485px;width:1px;height:123px;background:#c6d5e6"></div>
<div class="a" style="left:975px;top:485px;width:1px;height:123px;background:#c6d5e6"></div>
<div class="a" style="left:1041px;top:485px;width:1px;height:123px;background:#c6d5e6"></div>
<div class="a" style="left:1107px;top:485px;width:1px;height:123px;background:#c6d5e6"></div>
<div class="a" style="left:1173px;top:485px;width:1px;height:123px;background:#c6d5e6"></div>
<div class="a" style="left:1239px;top:485px;width:1px;height:123px;background:#c6d5e6"></div>
<div class="a" style="left:1305px;top:485px;width:1px;height:123px;background:#c6d5e6"></div>
<div class="a" style="left:1371px;top:485px;width:1px;height:123px;background:#c6d5e6"></div>
<div class="a" style="left:1437px;top:485px;width:1px;height:123px;background:#c6d5e6"></div>
<div class="t" style="left:375px;top:489px;font-family:'Liberation Serif',serif;font-size:17px;font-weight:bold;color:#222;text-decoration:underline;letter-spacing:1.1px">D709</div>
<div class="a" style="left:403px;top:508px;width:14px;height:15px;background:#fff6ea;border:1px solid #fdebd6"></div>
<div class="t" style="left:404px;top:510px;font-size:12px;color:#ee8418;font-weight:bold">复</div>
<svg style="left:426px;top:511px" width="10" height="6"><path d="M0 0H10L5 5.5Z" fill="#1d62c9"/></svg>
<div class="a" style="left:458px;top:492px;width:13px;height:12px;background:#d09a52;border-radius:1px"></div>
<div class="t" style="left:458.5px;top:492px;font-size:12px;color:#fff">始</div>
<div class="a" style="left:458px;top:510px;width:13px;height:12px;background:#3e7015;border-radius:1.5px"></div>
<div class="t" style="left:458.5px;top:510px;font-size:12px;color:#fff">终</div>
<div class="t" style="left:475px;top:491px;font-size:13px;font-weight:bold;color:#222">北京南</div>
<div class="t" style="left:475px;top:509px;font-size:13px;font-weight:bold;color:#222">上海</div>
<div class="t" style="left:559px;top:491px;font-size:14px;font-weight:bold;color:#222;letter-spacing:0.9px">19:46</div>
<div class="t" style="left:559px;top:509px;font-size:14px;font-weight:bold;color:#999;letter-spacing:0.9px">07:44</div>
<div class="t" style="left:634px;top:491px;font-size:14px;font-weight:bold;color:#222;letter-spacing:0.3px">11:58</div>
<div class="t" style="left:634px;top:509px;font-size:12px;color:#222">次日到达</div>
<div class="a" style="left:711.5px;width:66.0px;top:499px;text-align:center;font-size:11px;line-height:14px;font-weight:normal;color:#888">--</div>
<div class="a" style="left:777.5px;width:66.25px;top:499px;text-align:center;font-size:11px;line-height:14px;font-weight:normal;color:#888">--</div>
<div class="a" style="left:843.75px;width:65.64999999999998px;top:500px;text-align:center;font-size:13px;line-height:14px;font-weight:normal;color:#2a9a2a">有</div>
<div class="a" style="left:909.4px;width:65.60000000000002px;top:499px;text-align:center;font-size:11px;line-height:14px;font-weight:normal;color:#888">--</div>
<div class="a" style="left:975px;width:66px;top:500px;text-align:center;font-size:13px;line-height:14px;font-weight:normal;color:#2a9a2a">有</div>
<div class="a" style="left:1041px;width:66.79999999999995px;top:499px;text-align:center;font-size:11px;line-height:14px;font-weight:normal;color:#888">--</div>
<div class="a" style="left:1107.8px;width:65.60000000000014px;top:500px;text-align:center;font-size:13px;line-height:14px;font-weight:bold;color:#222">4</div>
<div class="a" style="left:1173.4px;width:66.29999999999995px;top:499px;text-align:center;font-size:11px;line-height:14px;font-weight:normal;color:#888">--</div>
<div class="a" style="left:1239.7px;width:65.89999999999986px;top:499px;text-align:center;font-size:11px;line-height:14px;font-weight:normal;color:#888">--</div>
<div class="a" style="left:1305.6px;width:66.30000000000018px;top:499px;text-align:center;font-size:11px;line-height:14px;font-weight:normal;color:#888">--</div>
<div class="a" style="left:1371.9px;width:65.59999999999991px;top:499px;text-align:center;font-size:11px;line-height:14px;font-weight:normal;color:#888">--</div>
<div class="a" style="left:1456px;top:491px;width:72px;height:30px;background:#0f7df7;border-radius:4px"></div>
<div class="a" style="left:1456px;width:72px;top:500px;text-align:center;font-size:13px;line-height:14px;color:#fff">预订</div>
<div class="t" style="left:377px;top:539px;font-family:'Liberation Serif',serif;font-size:17px;font-weight:bold;color:#222;text-decoration:underline;letter-spacing:1.1px">T109</div>
<svg style="left:426px;top:552px" width="10" height="6"><path d="M0 0H10L5 5.5Z" fill="#1d62c9"/></svg>
<div class="a" style="left:458px;top:533px;width:13px;height:12px;background:#d09a52;border-radius:1px"></div>
<div class="t" style="left:458.5px;top:533px;font-size:12px;color:#fff">始</div>
<div class="a" style="left:458px;top:551px;width:13px;height:12px;background:#3e7015;border-radius:1.5px"></div>
<div class="t" style="left:458.5px;top:551px;font-size:12px;color:#fff">终</div>
<div class="t" style="left:475px;top:532px;font-size:13px;font-weight:bold;color:#222">北京</div>
<div class="t" style="left:475px;top:550px;font-size:13px;font-weight:bold;color:#222">上海</div>
<div class="t" style="left:559px;top:532px;font-size:14px;font-weight:bold;color:#222;letter-spacing:0.9px">20:05</div>
<div class="t" style="left:559px;top:550px;font-size:14px;font-weight:bold;color:#999;letter-spacing:0.9px">11:00</div>
<div class="t" style="left:634px;top:532px;font-size:14px;font-weight:bold;color:#222;letter-spacing:0.3px">14:55</div>
<div class="t" style="left:634px;top:550px;font-size:12px;color:#222">次日到达</div>
<div class="a" style="left:711.5px;width:66.0px;top:540px;text-align:center;font-size:11px;line-height:14px;font-weight:normal;color:#888">--</div>
<div class="a" style="left:777.5px;width:66.25px;top:540px;text-align:center;font-size:11px;line-height:14px;font-weight:normal;color:#888">--</div>
<div class="a" style="left:843.75px;width:65.64999999999998px;top:540px;text-align:center;font-size:11px;line-height:14px;font-weight:normal;color:#888">--</div>
<div class="a" style="left:909.4px;width:65.60000000000002px;top:540px;text-align:center;font-size:11px;line-height:14px;font-weight:normal;color:#888">--</div>
<div class="a" style="left:975px;width:66px;top:541px;text-align:center;font-size:13px;line-height:14px;font-weight:normal;color:#888">无</div>
<div class="a" style="left:1041px;width:66.79999999999995px;top:540px;text-align:center;font-size:11px;line-height:14px;font-weight:normal;color:#888">--</div>
<div class="a" style="left:1107.8px;width:65.60000000000014px;top:541px;text-align:center;font-size:13px;line-height:14px;font-weight:normal;color:#888">无</div>
<div class="a" style="left:1173.4px;width:66.29999999999995px;top:540px;text-align:center;font-size:11px;line-height:14px;font-weight:normal;color:#888">--</div>
<div class="a" style="left:1239.7px;width:65.89999999999986px;top:541px;text-align:center;font-size:13px;line-height:14px;font-weight:normal;color:#888">无</div>
<div class="a" style="left:1305.6px;width:66.30000000000018px;top:541px;text-align:center;font-size:13px;line-height:14px;font-weight:normal;color:#888">无</div>
<div class="a" style="left:1371.9px;width:65.59999999999991px;top:540px;text-align:center;font-size:11px;line-height:14px;font-weight:normal;color:#888">--</div>
<div class="a" style="left:1456px;width:72px;top:541px;text-align:center;font-size:13px;line-height:14px;color:#888">预订</div>
<div class="t" style="left:375px;top:571px;font-family:'Liberation Serif',serif;font-size:17px;font-weight:bold;color:#222;text-decoration:underline;letter-spacing:1.1px">D705</div>
<div class="a" style="left:403px;top:590px;width:14px;height:15px;background:#fff6ea;border:1px solid #fdebd6"></div>
<div class="t" style="left:404px;top:592px;font-size:12px;color:#ee8418;font-weight:bold">复</div>
<svg style="left:426px;top:593px" width="10" height="6"><path d="M0 0H10L5 5.5Z" fill="#1d62c9"/></svg>
<div class="a" style="left:458px;top:574px;width:13px;height:12px;background:#d09a52;border-radius:1px"></div>
<div class="t" style="left:458.5px;top:574px;font-size:12px;color:#fff">始</div>
<div class="a" style="left:458px;top:592px;width:13px;height:12px;background:#3e7015;border-radius:1.5px"></div>
<div class="t" style="left:458.5px;top:592px;font-size:12px;color:#fff">终</div>
<div class="t" style="left:475px;top:573px;font-size:13px;font-weight:bold;color:#222">北京</div>
<div class="t" style="left:475px;top:591px;font-size:13px;font-weight:bold;color:#222">上海</div>
<div class="t" style="left:559px;top:573px;font-size:14px;font-weight:bold;color:#222;letter-spacing:0.9px">21:21</div>
<div class="t" style="left:559px;top:591px;font-size:14px;font-weight:bold;color:#999;letter-spacing:0.9px">09:21</div>
<div class="t" style="left:634px;top:573px;font-size:14px;font-weight:bold;color:#222;letter-spacing:0.3px">12:00</div>
<div class="t" style="left:634px;top:591px;font-size:12px;color:#222">次日到达</div>
<div class="a" style="left:711.5px;width:66.0px;top:581px;text-align:center;font-size:11px;line-height:14px;font-weight:normal;color:#888">--</div>
<div class="a" style="left:777.5px;width:66.25px;top:581px;text-align:center;font-size:11px;line-height:14px;font-weight:normal;color:#888">--</div>
<div class="a" style="left:843.75px;width:65.64999999999998px;top:582px;text-align:center;font-size:13px;line-height:14px;font-weight:normal;color:#888">无</div>
<div class="a" style="left:909.4px;width:65.60000000000002px;top:581px;text-align:center;font-size:11px;line-height:14px;font-weight:normal;color:#888">--</div>
<div class="a" style="left:975px;width:66px;top:582px;text-align:center;font-size:13px;line-height:14px;font-weight:normal;color:#2a9a2a">有</div>
<div class="a" style="left:1041px;width:66.79999999999995px;top:581px;text-align:center;font-size:11px;line-height:14px;font-weight:normal;color:#888">--</div>
<div class="a" style="left:1107.8px;width:65.60000000000014px;top:582px;text-align:center;font-size:13px;line-height:14px;font-weight:normal;color:#888">无</div>
<div class="a" style="left:1173.4px;width:66.29999999999995px;top:581px;text-align:center;font-size:11px;line-height:14px;font-weight:normal;color:#888">--</div>
<div class="a" style="left:1239.7px;width:65.89999999999986px;top:581px;text-align:center;font-size:11px;line-height:14px;font-weight:normal;color:#888">--</div>
<div class="a" style="left:1305.6px;width:66.30000000000018px;top:582px;text-align:center;font-size:13px;line-height:14px;font-weight:normal;color:#888">无</div>
<div class="a" style="left:1371.9px;width:65.59999999999991px;top:581px;text-align:center;font-size:11px;line-height:14px;font-weight:normal;color:#888">--</div>
<div class="a" style="left:1456px;top:573px;width:72px;height:30px;background:#0f7df7;border-radius:4px"></div>
<div class="a" style="left:1456px;width:72px;top:582px;text-align:center;font-size:13px;line-height:14px;color:#fff">预订</div>

<!-- notice -->
<div class="a" style="left:357px;top:485px;width:1190px;height:186px;border:1px solid #4a7ba6;border-top:none"></div>
<div class="a" style="left:358px;top:618px;width:1188px;height:52px;background:#fffbe6;border:2px solid #f3e68a;border-radius:4px"></div>
<div class="t" style="left:363px;top:630px;font-size:12px;color:#4d4d4d;letter-spacing:0.12px">如果查询结果中没有满足需求的车次，您还可以使用<span style="color:#1e6fd0">接续换乘</span> 功能，查询途中换乘一次的部分列车余票情况。</div>
<div class="t" style="left:363px;top:650px;font-size:12px;color:#4d4d4d;letter-spacing:0.12px">显示的卧铺票价均为上铺票价，供您参考。具体票价以您确认支付时实际购买的铺别票价为准。</div>

<!-- /PAGE -->

<!-- ============ DEVTOOLS ============ -->
<!-- DEVTOOLS -->
<!-- devtools -->
<div class="a" style="left:0;top:828px;width:1920px;height:252px;background:#fff"></div>
<div class="a" style="left:0;top:828px;width:1920px;height:30px;background:#f9f9fa;border-top:1px solid #e0e0e2;border-bottom:1px solid #e0e0e2"></div>
<div class="a" style="left:256px;top:829px;width:61px;height:2px;background:#0a84ff"></div>
<svg style="left:8px;top:836px" width="17" height="15" viewBox="0 0 17 15"><path d="M6 13.5H2.5A1.5 1.5 0 0 1 1 12V2.5A1.5 1.5 0 0 1 2.5 1H13A1.5 1.5 0 0 1 14.5 2.5V5.5" fill="none" stroke="#0c0c0d" stroke-width="1.7"/><path d="M7.5 6.5L16 9.5L12.5 10.8L15.5 14L14.3 15L11.3 11.8L9.5 14.5Z" fill="#0c0c0d"/></svg>
<div class="a" style="left:32px;top:833px;width:1px;height:20px;background:#e0e0e2"></div>
<svg style="left:42px;top:835px" width="15" height="16" viewBox="0 0 15 16"><rect x="2" y="2.5" width="11" height="11" rx="2.5" fill="none" stroke="#0c0c0d" stroke-width="1.7"/><path d="M7.5 0V2.5M7.5 13.5V16M0 8H2M13 8H15" stroke="#0c0c0d" stroke-width="1.4"/></svg>
<div class="t dt" style="left:63px">查看器</div>
<svg style="left:115px;top:836px" width="17" height="14" viewBox="0 0 17 14"><rect x="1" y="1" width="15" height="12" rx="2" fill="none" stroke="#0c0c0d" stroke-width="1.7"/><path d="M5.5 4L8.5 7L5.5 10" fill="none" stroke="#0c0c0d" stroke-width="1.3"/></svg>
<div class="t dt" style="left:137px">控制台</div>
<svg style="left:189px;top:836px" width="16" height="14" viewBox="0 0 16 14"><path d="M1 2.5A1.5 1.5 0 0 1 2.5 1H10.5L15 7L10.5 13H2.5A1.5 1.5 0 0 1 1 11.5Z" fill="none" stroke="#0c0c0d" stroke-width="1.7" stroke-linejoin="round"/></svg>
<div class="t dt" style="left:211px">调试器</div>
<svg style="left:263px;top:835px" width="16" height="16" viewBox="0 0 16 16"><path d="M4 15V1.5M0.8 5L4 1.5L7.2 5M12 1V14.5M8.8 11L12 14.5L15.2 11" fill="none" stroke="#0a60d0" stroke-width="1.9"/></svg>
<div class="t dt" style="left:285px;color:#0a60d0">网络</div>
<svg style="left:325px;top:835px" width="16" height="15" viewBox="0 0 16 15"><path d="M5.6 1.2C3.6 1.2 3.2 2 3.2 3.8V5.8C3.2 6.8 2.5 7.4 1 7.5C2.5 7.6 3.2 8.2 3.2 9.2V11.2C3.2 13 3.6 13.8 5.6 13.8M10.4 1.2C12.4 1.2 12.8 2 12.8 3.8V5.8C12.8 6.8 13.5 7.4 15 7.5C13.5 7.6 12.8 8.2 12.8 9.2V11.2C12.8 13 12.4 13.8 10.4 13.8" fill="none" stroke="#2a2a2e" stroke-width="1.8"/></svg>
<div class="t dt" style="left:347px">样式编辑器</div>
<svg style="left:423px;top:835px" width="15" height="15" viewBox="0 0 15 15"><path d="M3 13.5A6.5 6.5 0 1 1 12 13.5" fill="none" stroke="#0c0c0d" stroke-width="1.7"/><path d="M7.5 10L10 5" stroke="#0c0c0d" stroke-width="1.6"/><circle cx="7.3" cy="10.5" r="1.6" fill="#0c0c0d"/></svg>
<div class="t dt" style="left:445px">性能</div>
<svg style="left:485px;top:835px" width="16" height="16" viewBox="0 0 16 16"><rect x="4" y="1.5" width="8" height="13" rx="1.5" fill="none" stroke="#0c0c0d" stroke-width="1.6"/><path d="M1 4H4M1 7H4M1 10H4M1 13H4M12 4H15M12 7H15M12 10H15M12 13H15" stroke="#0c0c0d" stroke-width="1.1"/></svg>
<div class="t dt" style="left:507px">内存</div>
<svg style="left:548px;top:835px" width="14" height="16" viewBox="0 0 14 16"><rect x="1" y="1" width="12" height="14" rx="2" fill="none" stroke="#0c0c0d" stroke-width="1.7"/><path d="M4 6H10M4 10H10" stroke="#0c0c0d" stroke-width="1.3"/></svg>
<div class="t dt" style="left:568px">存储</div>
<svg style="left:610px;top:834px" width="14" height="17" viewBox="0 0 14 17"><circle cx="7" cy="2.2" r="2" fill="#0c0c0d"/><path d="M0.5 5.5H13.5" stroke="#0c0c0d" stroke-width="2"/><path d="M7 5V10.5M4.5 16.5L6 10.5H8L9.5 16.5" fill="none" stroke="#0c0c0d" stroke-width="2.2"/></svg>
<div class="t dt" style="left:630px">无障碍环境</div>
<svg style="left:708px;top:835px" width="14" height="15" viewBox="0 0 14 15"><g fill="none" stroke="#0c0c0d" stroke-width="1.1"><circle cx="2" cy="2.5" r="1.5"/><circle cx="7" cy="2.5" r="1.5"/><circle cx="12" cy="2.5" r="1.5"/><circle cx="2" cy="7.5" r="1.5"/><circle cx="7" cy="7.5" r="1.5"/><circle cx="12" cy="7.5" r="1.5"/><circle cx="2" cy="12.5" r="1.5"/><circle cx="7" cy="12.5" r="1.5"/><circle cx="12" cy="12.5" r="1.5"/></g></svg>
<div class="t dt" style="left:728px">应用程序</div>
<!-- right toolbar icons -->
<svg style="left:1758px;top:835px" width="16" height="15" viewBox="0 0 16 15"><rect x="1" y="1" width="14" height="13" rx="2" fill="none" stroke="#0c0c0d" stroke-width="1.6"/><path d="M1 5H15M6 5V14" stroke="#0c0c0d" stroke-width="1.4"/></svg>
<svg style="left:1785px;top:835px" width="14" height="15" viewBox="0 0 14 15"><path d="M7 0V4M4 2H10" stroke="#0c0c0d" stroke-width="1.4"/><rect x="1.5" y="10" width="11" height="3.5" fill="#b8b8bc"/><rect x="1" y="6" width="12" height="8" rx="2" fill="none" stroke="#0c0c0d" stroke-width="1.6"/><path d="M1 10H13" stroke="#0c0c0d" stroke-width="1.4"/></svg>
<svg style="left:1810px;top:837px" width="17" height="11" viewBox="0 0 17 11"><rect x="1" y="1" width="15" height="9" rx="1.5" fill="none" stroke="#0c0c0d" stroke-width="1.6"/><path d="M4 1V5M7 1V5M10 1V5M13 1V5" stroke="#0c0c0d" stroke-width="1.3"/></svg>
<div class="a" style="left:1836px;top:833px;width:1px;height:20px;background:#e0e0e2"></div>
<svg style="left:1847px;top:834px" width="14" height="17" viewBox="0 0 14 17"><path d="M4 3V2A1.5 1.5 0 0 1 5.5 0.8H12A1.5 1.5 0 0 1 13.2 2V15A1.5 1.5 0 0 1 12 16.2H9" fill="none" stroke="#0c0c0d" stroke-width="1.6"/><rect x="0.8" y="6.8" width="6" height="9.4" rx="1" fill="none" stroke="#0c0c0d" stroke-width="1.6"/></svg>
<svg style="left:1873px;top:840px" width="16" height="5"><circle cx="2.3" cy="2.5" r="1.9" fill="#0c0c0d"/><circle cx="8" cy="2.5" r="1.9" fill="#0c0c0d"/><circle cx="13.7" cy="2.5" r="1.9" fill="#0c0c0d"/></svg>
<svg style="left:1901px;top:837px" width="12" height="12"><path d="M1 1L11 11M11 1L1 11" stroke="#0c0c0d" stroke-width="1.6"/></svg>

<!-- filter row -->
<svg style="left:10px;top:864px" width="14" height="16" viewBox="0 0 14 16"><path d="M0.5 3H13.5M4.5 3V1.2H9.5V3" fill="none" stroke="#0c0c0d" stroke-width="1.4"/><path d="M2 4H12L11.2 14.2A1.5 1.5 0 0 1 9.7 15.3H4.3A1.5 1.5 0 0 1 2.8 14.2Z" fill="none" stroke="#0c0c0d" stroke-width="1.6"/><path d="M5.3 6V13M8.7 6V13M7 6V13" stroke="#0c0c0d" stroke-width="1"/></svg>
<div class="a" style="left:32px;top:862px;width:1px;height:20px;background:#e0e0e2"></div>
<svg style="left:42px;top:866px" width="11" height="12" viewBox="0 0 11 12"><path d="M0.8 0.8H10.2L6.5 5.5V11L4.5 9.5V5.5Z" fill="none" stroke="#8f8f9d" stroke-width="1.2" stroke-linejoin="round"/></svg>
<div class="t dt" style="left:57px;top:866px;color:#9a9aa0;letter-spacing:-0.8px">过滤 URL</div>
<svg style="left:1298px;top:866px" width="9" height="12"><path d="M1.5 1V11M7.5 1V11" stroke="#0c0c0d" stroke-width="1.3"/></svg>
<svg style="left:1324px;top:864px" width="14" height="15" viewBox="0 0 14 15"><circle cx="5.8" cy="5.8" r="4.6" fill="none" stroke="#0c0c0d" stroke-width="1.7"/><path d="M9.2 9.5L13 13.8" stroke="#0c0c0d" stroke-width="2"/></svg>
<svg style="left:1352px;top:864px" width="14" height="14" viewBox="0 0 14 14"><circle cx="7" cy="7" r="5.8" fill="none" stroke="#0c0c0d" stroke-width="1.9"/><path d="M3 3L11 11" stroke="#0c0c0d" stroke-width="1.9"/></svg>
<div class="a" style="left:1375px;top:862px;width:1px;height:20px;background:#e0e0e2"></div>
<div class="a" style="left:1384px;top:864px;width:34px;height:16px;background:#e3e3e6;border-radius:2px"></div>
<div class="t dt" style="left:1390px;top:866px">所有</div>
<div class="t dt" style="left:1426px;top:866px">HTML</div>
<div class="t dt" style="left:1471px;top:866px">CSS</div>
<div class="t dt" style="left:1504px;top:866px">JS</div>
<div class="t dt" style="left:1530px;top:866px">XHR</div>
<div class="t dt" style="left:1566px;top:866px">字体</div>
<div class="t dt" style="left:1602px;top:866px">图像</div>
<div class="t dt" style="left:1638px;top:866px">媒体</div>
<div class="t dt" style="left:1674px;top:866px">WS</div>
<div class="t dt" style="left:1706px;top:866px">其他</div>
<div class="a" style="left:1743px;top:862px;width:1px;height:20px;background:#e0e0e2"></div>
<div class="a" style="left:1751px;top:865px;width:13px;height:13px;border:1px solid #222;border-radius:2px;background:#fff"></div>
<div class="t dt" style="left:1767px;top:866px;letter-spacing:-0.6px">禁用缓存</div>
<div class="a" style="left:1819px;top:862px;width:1px;height:20px;background:#e0e0e2"></div>
<div class="t dt" style="left:1833px;top:866px;color:#333;letter-spacing:-0.8px">不节流</div>
<svg style="left:1868px;top:866px" width="7" height="11"><path d="M0.5 4.5L3.5 0.8L6.5 4.5ZM0.5 6.5L3.5 10.2L6.5 6.5Z" fill="#0c0c0d"/></svg>
<div class="a" style="left:1886px;top:862px;width:1px;height:20px;background:#e0e0e2"></div>
<svg style="left:1895px;top:864px" width="16" height="16" viewBox="0 0 16 16"><g stroke="#0c0c0d" stroke-width="2.2"><path d="M8 0.5V15.5M0.5 8H15.5M2.7 2.7L13.3 13.3M13.3 2.7L2.7 13.3"/></g><circle cx="8" cy="8" r="4.8" fill="#0c0c0d"/><circle cx="8" cy="8" r="2.2" fill="#fff"/></svg>

<!-- request list header -->
<div class="a" style="left:0;top:886px;width:1113px;height:26px;background:#f9f9fa;border-bottom:1px solid #e0e0e2"></div>
<div class="a" style="left:74px;top:887px;width:1px;height:25px;background:#e0e0e2"></div>
<div class="a" style="left:149px;top:887px;width:1px;height:25px;background:#e0e0e2"></div>
<div class="a" style="left:297px;top:887px;width:1px;height:25px;background:#e0e0e2"></div>
<div class="a" style="left:669px;top:887px;width:1px;height:25px;background:#e0e0e2"></div>
<div class="a" style="left:817px;top:887px;width:1px;height:25px;background:#e0e0e2"></div>
<div class="a" style="left:891px;top:887px;width:1px;height:25px;background:#e0e0e2"></div>
<div class="a" style="left:1040px;top:887px;width:1px;height:25px;background:#e0e0e2"></div>
<div class="t dh" style="left:5px">状态</div>
<div class="t dh" style="left:80px">方法</div>
<div class="t dh" style="left:155px">域名</div>
<div class="t dh" style="left:303px">文件</div>
<div class="t dh" style="left:674px">发起者</div>
<div class="t dh" style="left:823px">类型</div>
<div class="t dh" style="left:897px">传输</div>
<div class="t dh" style="left:1046px">大小</div>
<!-- selected row -->
<div class="a" style="left:0;top:912px;width:1113px;height:24px;background:#0074e8"></div>
<div class="a" style="left:5px;top:917px;width:22px;height:14px;background:#058b00;border-radius:2px"></div>
<div class="t" style="left:7px;top:919px;font-family:'Liberation Mono',monospace;font-size:11px;font-weight:bold;color:#fff;letter-spacing:-0.6px">200</div>
<div class="t dr" style="left:80px">GET</div>
<svg style="left:155px;top:918px" width="10" height="12" viewBox="0 0 10 12"><path d="M2.5 5.5V3.5A2.5 2.5 0 0 1 7.5 3.5V5.5" fill="none" stroke="#fff" stroke-width="1.6"/><rect x="0.5" y="5.2" width="9" height="6.5" rx="1" fill="#fff"/></svg>
<div class="t dr" style="left:170px">kyfw.12306.cn</div>
<div class="t dr" style="left:303px">query?leftTicketDTO.train_date=2021-05-11&amp;leftTicketDTO.from_stat</div>
<div class="t dr" style="left:674px">common_js.js:21 (xhr)</div>
<div class="t dr" style="left:823px">json</div>
<div class="t dr" style="left:897px">1.65 KB</div>
<div class="t dr" style="left:1046px">1.84 KB</div>

<!-- status bar -->
<div class="a" style="left:0;top:1054px;width:1113px;height:24px;background:#f9f9fa;border-top:1px solid #e0e0e2"></div>
<svg style="left:10px;top:1059px" width="14" height="16" viewBox="0 0 14 16"><circle cx="7" cy="9" r="5.8" fill="none" stroke="#0c0c0d" stroke-width="1.7"/><path d="M5 1H9M7 1V3M7 9L9 6.5" fill="none" stroke="#0c0c0d" stroke-width="1.6"/></svg>
<div class="t dt" style="left:41px;top:1061px;letter-spacing:-0.4px">1 个请求</div>
<div class="a" style="left:95px;top:1057px;width:1px;height:19px;background:#e0e0e2"></div>
<div class="t dt" style="left:105px;top:1061px;letter-spacing:-0.45px">已传输 1.84 KB / 1.65 KB</div>
<div class="a" style="left:240px;top:1057px;width:1px;height:19px;background:#e0e0e2"></div>
<div class="t dt" style="left:251px;top:1061px;letter-spacing:-0.3px">完成<span style="letter-spacing:-3px">：</span>66 毫秒</div>
<div class="a" style="left:0;top:1078px;width:1920px;height:2px;background:#8c7a4a"></div>

<!-- side panel -->
<div class="a" style="left:1113px;top:886px;width:1px;height:192px;background:#e0e0e2"></div>
<div class="a" style="left:1114px;top:886px;width:806px;height:26px;background:#f9f9fa;border-bottom:1px solid #e0e0e2"></div>
<svg style="left:1121px;top:892px" width="15" height="14" viewBox="0 0 15 14"><rect x="0.8" y="0.8" width="13.4" height="12.4" rx="1" fill="none" stroke="#3a3a3c" stroke-width="1.4"/><path d="M10.5 1V13" stroke="#3a3a3c" stroke-width="1.4"/><path d="M4 4L8 7L4 10Z" fill="none" stroke="#3a3a3c" stroke-width="1.2" stroke-linejoin="round"/></svg>
<div class="a" style="left:1142px;top:887px;width:58px;height:2px;background:#0a84ff"></div>
<div class="t dh" style="left:1153px;color:#0a60d0">消息头</div>
<div class="t dh" style="left:1211px">Cookie</div>
<div class="t dh" style="left:1273px">请求</div>
<div class="t dh" style="left:1318px">响应</div>
<div class="t dh" style="left:1365px">耗时</div>
<div class="t dh" style="left:1411px">栈跟踪</div>
<div class="t dh" style="left:1468px">安全性</div>
<div class="a" style="left:1114px;top:912px;width:806px;height:24px;background:#fff;border-bottom:1px solid #e0e0e2"></div>
<svg style="left:1123px;top:918px" width="11" height="12" viewBox="0 0 11 12"><path d="M0.8 0.8H10.2L6.5 5.5V11L4.5 9.5V5.5Z" fill="none" stroke="#8f8f9d" stroke-width="1.2" stroke-linejoin="round"/></svg>
<div class="t dt" style="left:1137px;top:918px;color:#9a9aa0;font-size:11px">过滤消息头</div>
<div class="a" style="left:1852px;top:915px;width:1px;height:19px;background:#e0e0e2"></div>
<div class="t dt" style="left:1855px;top:918px">拦截</div>
<div class="a" style="left:1880px;top:915px;width:1px;height:19px;background:#e0e0e2"></div>
<div class="t dt" style="left:1884px;top:918px">重发</div>
<svg style="left:1908px;top:919px" width="7" height="11"><path d="M0.5 4.5L3.5 0.8L6.5 4.5ZM0.5 6.5L3.5 10.2L6.5 6.5Z" fill="#0c0c0d"/></svg>
<!-- panel content -->
<svg style="left:1123px;top:950px" width="5" height="8"><path d="M0 0L4.5 4L0 8Z" fill="#5b5b66"/></svg>
<div class="t dp" style="left:1134px;top:947px;font-weight:bold;color:#737373">GET</div>
<div class="t dp" style="left:1161px;top:947px;color:#737373">https://<span style="color:#0c0c0d">kyfw.12306.cn/otn/leftTicket/query</span>?<span style="color:#0074e8">leftTicketDTO.train_date</span>=<span style="color:#0c0c0d">2021-05-11</span>&amp;<span style="color:#0074e8">leftTicketDTO.from_station</span>=<span style="color:#0c0c0d">BJP</span>&amp;<span style="color:#0074e8">leftTicketDTO.to_stati</span></div>
<div class="t dp" style="left:1134px;top:963px;color:#737373"><span style="color:#0074e8">on</span>=<span style="color:#0c0c0d">SHH</span>&amp;<span style="color:#0074e8">purpose_codes</span>=<span style="color:#0c0c0d">ADULT</span></div>
<div class="a" style="left:1114px;top:986px;width:770px;height:1px;background:#e8e8ea"></div>
<div class="t dp" style="left:1134px;top:997px;color:#8a8a8f">状态</div>
<div class="t dp" style="left:1227px;top:997px;color:#058b00"><span style="font-family:'Liberation Mono',monospace;font-weight:bold;font-size:11px;letter-spacing:-0.5px">200</span> OK</div>
<svg style="left:1268px;top:996px" width="14" height="14" viewBox="0 0 14 14"><circle cx="7" cy="7" r="6" fill="none" stroke="#0c0c0d" stroke-width="1.2"/><path d="M5 5.2A2 2 0 1 1 7.6 7.2C7 7.5 7 8 7 8.8" fill="none" stroke="#0c0c0d" stroke-width="1.2"/><circle cx="7" cy="10.6" r="0.8" fill="#0c0c0d"/></svg>
<div class="t dp" style="left:1134px;top:1019px;color:#8a8a8f">版本</div>
<div class="t dp" style="left:1227px;top:1019px">HTTP/1.1</div>
<div class="t dp" style="left:1134px;top:1038px;color:#8a8a8f">传输</div>
<div class="t dp" style="left:1227px;top:1038px">1.65 KB（大小 1.84 KB)</div>
<div class="t dp" style="left:1134px;top:1057px;color:#8a8a8f">Referrer 政策</div>
<div class="t dp" style="left:1227px;top:1057px">strict-origin-when-cross-origin</div>
<!-- panel scrollbar -->
<div class="a" style="left:1904px;top:937px;width:16px;height:141px;background:#f0f0f0"></div>
<div class="a" style="left:1905px;top:955px;width:14px;height:18px;background:#cdcdcd"></div>
<svg style="left:1908px;top:943px" width="9" height="6"><path d="M0.8 5L4.5 1.3L8.2 5" fill="none" stroke="#505050" stroke-width="1.5"/></svg>
<svg style="left:1908px;top:1067px" width="9" height="6"><path d="M0.8 1L4.5 4.7L8.2 1" fill="none" stroke="#505050" stroke-width="1.5"/></svg>

<div class="t" style="left:1652px;top:1053px;font-size:17px;letter-spacing:-0.55px;color:rgba(150,150,155,.16)">https://blog.csdn.net/czh2637750821</div>
<!-- /DEVTOOLS -->
</body></html>
